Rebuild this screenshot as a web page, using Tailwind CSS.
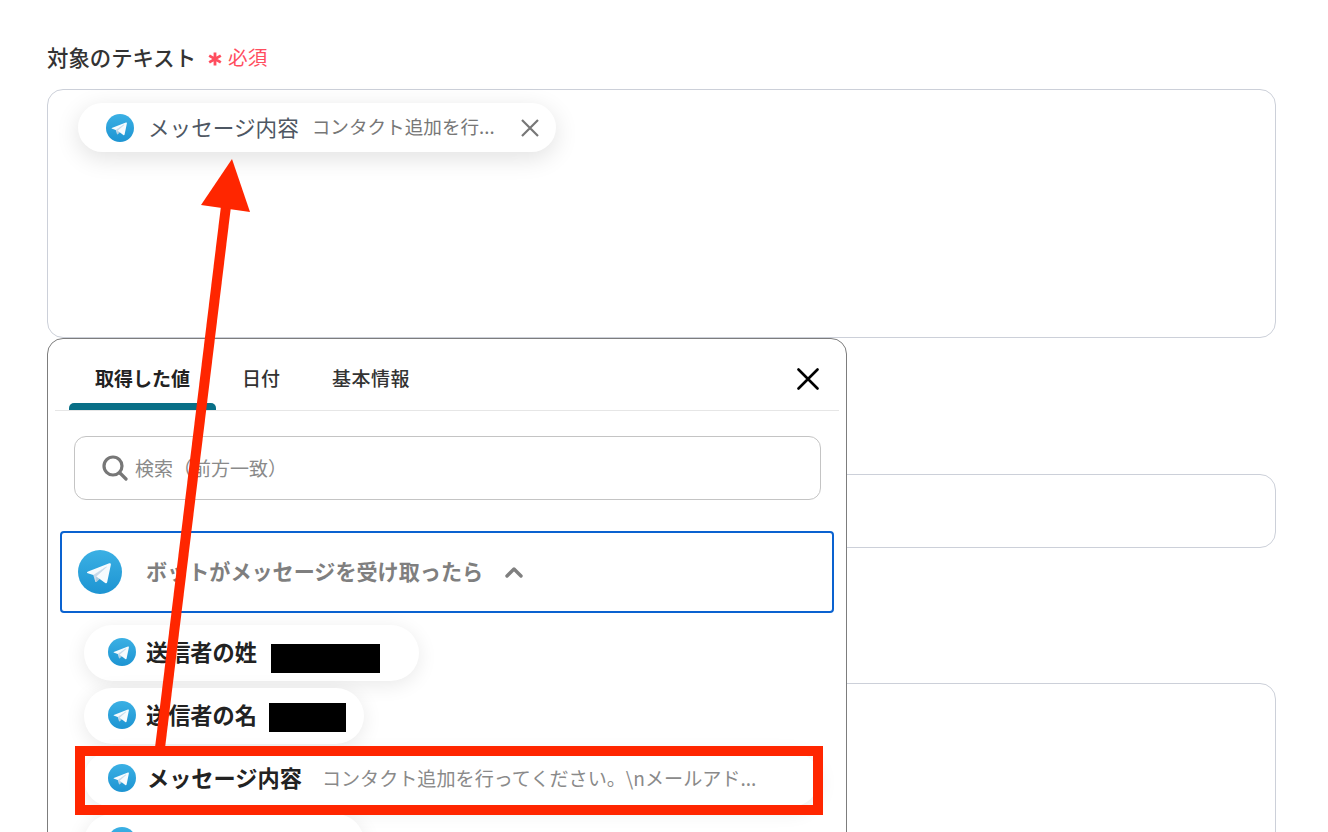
<!DOCTYPE html>
<html lang="ja">
  <head>
    <meta charset="UTF-8">
    <title>対象のテキスト</title>
    <script src="https://cdn.jsdelivr.net/npm/@tailwindcss/browser@4"></script>
  </head>
  <body class="bg-white font-['Noto_Sans_CJK_JP','Liberation_Sans',sans-serif]">
    <!-- Telegram icon, shared -->
    <svg class="absolute h-0 w-0" width="0" height="0">
      <defs>
        <linearGradient id="tg-bg" x1="0.5" y1="0" x2="0.5" y2="1">
          <stop offset="0" stop-color="#3bb0e4"/>
          <stop offset="1" stop-color="#1d94d2"/>
        </linearGradient>
        <symbol id="tg" viewBox="0 0 240 240">
          <circle cx="120" cy="120" r="120" fill="url(#tg-bg)"/>
          <path fill="#c8daea" d="M98 175c-3.888 0-3.227-1.468-4.568-5.17L82 132.207 170 80"/>
          <path fill="#a9c9dd" d="M98 175c3 0 4.325-1.372 6-3l16-15.558-19.958-12.035"/>
          <path fill="#f6fbfe" d="M100.04 144.41l48.36 35.729c5.519 3.045 9.501 1.468 10.876-5.123l19.685-92.763c2.015-8.08-3.08-11.746-8.36-9.349l-115.59 44.571c-7.89 3.165-7.843 7.567-1.438 9.528l29.663 9.259 68.673-43.325c3.242-1.966 6.218-.91 3.776 1.258"/>
        </symbol>
      </defs>
    </svg>

    <div class="relative h-[832px] w-[1328px] overflow-hidden">
      <!-- Form behind the panel -->
      <div class="pl-[47px] pr-[52px] pt-[42px]">
        <div class="flex h-[30px] items-center">
          <span class="text-[21.4px] leading-[30px] font-medium text-[#333]">対象のテキスト</span>
          <span class="ml-3 flex items-center text-[19.6px] leading-[30px] text-[#ff4d5e]">
            <svg class="mr-[6px] mt-[3px] h-[14px] w-[14px]" viewBox="0 0 14 14" fill="none" stroke="#ff4d5e" stroke-width="2.8">
              <path d="M7 0.5V13.5M1.2 3.6L12.8 10.4M12.8 3.6L1.2 10.4"/>
            </svg>
            必須
          </span>
        </div>
        <div class="mt-[17px] h-[249px] rounded-2xl border border-[#ccd0d9] pl-[30px] pt-[13px]">
          <div class="flex h-[49px] w-[478px] items-center rounded-full bg-white pl-[28px] shadow-[0_6px_24px_rgba(0,0,0,0.12)]">
            <svg class="h-[28px] w-[28px] shrink-0"><use href="#tg"/></svg>
            <span class="ml-[14px] pb-[2px] text-[21.6px] leading-none whitespace-nowrap text-[#4e5763]">メッセージ内容</span>
            <span class="ml-[13px] pb-[2px] text-[18.6px] leading-none whitespace-nowrap text-[#777]">コンタクト追加を行...</span>
            <svg class="ml-[26px] h-[18px] w-[18px] shrink-0" viewBox="0 0 18 18" fill="none" stroke="#777" stroke-width="2.2">
              <path d="M1 1L17 17M17 1L1 17"/>
            </svg>
          </div>
        </div>
        <div class="mt-[136px] h-[74px] rounded-2xl border border-[#ccd0d9]"></div>
        <div class="mt-[135px] h-[300px] rounded-2xl border border-[#ccd0d9]"></div>
      </div>

      <!-- Value picker panel -->
      <div class="absolute top-[338px] left-[47px] h-[560px] w-[800px] rounded-2xl border border-[#7d7d7d] bg-white px-[7px]">
        <div class="flex h-[72px] items-end border-b border-[#e6e6e6] pl-[14px]">
          <div class="relative flex h-full items-center px-[26px] pt-[9px] pb-[1px] text-[19px] font-bold whitespace-nowrap text-[#222]">
            取得した値
            <div class="absolute inset-x-0 bottom-0 h-[7px] rounded-t-[5px] bg-[#086f87]"></div>
          </div>
          <div class="flex h-full items-center px-[26px] pt-[9px] pb-[1px] text-[19px] font-medium whitespace-nowrap text-[#333]">日付</div>
          <div class="flex h-full items-center px-[26px] pt-[9px] pb-[1px] text-[19px] font-medium tracking-[0.5px] whitespace-nowrap text-[#333]">基本情報</div>
          <svg class="mt-[30px] mr-[20px] mb-[20px] ml-auto h-[22px] w-[22px]" viewBox="0 0 22 22" fill="none" stroke="#000" stroke-width="2.6" stroke-linecap="round">
            <path d="M1.5 1.5L20.5 20.5M20.5 1.5L1.5 20.5"/>
          </svg>
        </div>

        <div class="ml-[19px] mt-[25px] flex h-[64px] w-[747px] items-center rounded-xl border border-[#c4c4c4] pl-[27px]">
          <svg class="h-[26px] w-[26px]" viewBox="0 0 26 26" fill="none" stroke="#777" stroke-width="3.2" stroke-linecap="round">
            <circle cx="11" cy="11" r="9"/>
            <path d="M18 18L24 24"/>
          </svg>
          <span class="ml-[7px] pt-[1px] text-[19px] text-[#8a8a8a]">検索（前方一致）</span>
        </div>

        <div class="ml-[5px] mt-[31px] flex h-[82px] w-[774px] items-center rounded-[4px] border-2 border-[#0a62d0] pl-[16px]">
          <svg class="h-[44px] w-[44px] shrink-0"><use href="#tg"/></svg>
          <span class="ml-[24px] pb-[1px] text-[21.1px] font-bold whitespace-nowrap text-[#7f7f7f]">ボットがメッセージを受け取ったら</span>
          <svg class="ml-[22px] h-[12px] w-[18px]" viewBox="0 0 18 12" fill="none" stroke="#7f7f7f" stroke-width="3.4" stroke-linecap="round" stroke-linejoin="round">
            <path d="M2 10L9 3L16 10"/>
          </svg>
        </div>

        <div class="ml-[29px] mt-[12px] flex flex-col gap-[7px]">
          <div class="flex h-[56px] w-[335px] items-center rounded-full bg-white pl-[24px] shadow-[0_4px_20px_rgba(0,0,0,0.09)]">
            <svg class="h-[28px] w-[28px] mb-[2px] shrink-0"><use href="#tg"/></svg>
            <span class="ml-[10px] pb-[3px] text-[22.2px] font-bold whitespace-nowrap text-[#222]">送信者の姓</span>
            <div class="ml-[14px] mt-[10px] h-[29px] w-[109px] bg-black"></div>
          </div>
          <div class="flex h-[56px] w-[280px] items-center rounded-full bg-white pl-[24px] shadow-[0_4px_20px_rgba(0,0,0,0.09)]">
            <svg class="h-[28px] w-[28px] mb-[2px] shrink-0"><use href="#tg"/></svg>
            <span class="ml-[10px] pb-[3px] text-[22.2px] font-bold whitespace-nowrap text-[#222]">送信者の名</span>
            <div class="ml-[12px] mt-[3px] h-[29px] w-[77px] bg-black"></div>
          </div>
          <div class="flex h-[56px] w-[735px] items-center rounded-full bg-white pl-[24px] shadow-[0_4px_20px_rgba(0,0,0,0.09)]">
            <svg class="h-[28px] w-[28px] mb-[2px] shrink-0"><use href="#tg"/></svg>
            <span class="ml-[11px] pb-[3px] text-[22.2px] font-bold whitespace-nowrap text-[#222]">メッセージ内容</span>
            <span class="ml-[20px] pb-[2px] text-[19.1px] whitespace-nowrap text-[#8a8a8a]">コンタクト追加を行ってください。\nメールアド...</span>
          </div>
          <div class="flex h-[56px] w-[280px] items-center rounded-full bg-white pl-[24px] shadow-[0_4px_20px_rgba(0,0,0,0.09)]">
            <svg class="h-[28px] w-[28px] mb-[2px] shrink-0"><use href="#tg"/></svg>
          </div>
        </div>
      </div>

      <!-- Red annotation on top -->
      <svg class="pointer-events-none absolute inset-0" width="1328" height="832" viewBox="0 0 1328 832" fill="none">
        <rect x="80" y="751" width="738" height="59" stroke="#ff2600" stroke-width="10"/>
        <path d="M226 206L160 748" stroke="#ff2600" stroke-width="10"/>
        <polygon points="232,159 201,205 250,212" fill="#ff2600"/>
      </svg>
    </div>
  </body>
</html>
